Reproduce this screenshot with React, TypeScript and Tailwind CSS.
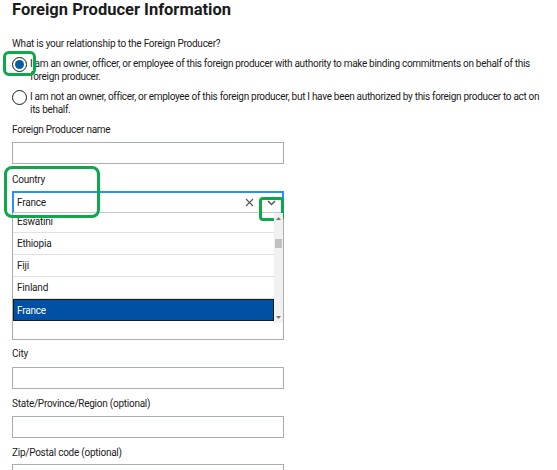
import React, { useState } from 'react';

const countries = ['Ethiopia', 'Fiji', 'Finland'];

const Radio: React.FC<{ checked: boolean }> = ({ checked }) => (
  <span className="flex h-[15px] w-[15px] shrink-0 items-center justify-center rounded-full border-[1.5px] border-[#1b1b1b] bg-white">
    {checked && <span className="h-[9px] w-[9px] rounded-full bg-[#005ea2]" />}
  </span>
);

const Field: React.FC<{ label: string; top: string; gap: string }> = ({ label, top, gap }) => (
  <div className={top}>
    <label className="block h-[14px] text-[10px] leading-[14px] tracking-[-0.25px]">{label}</label>
    <input className={`${gap} block h-[22px] w-[272px] border border-[#a9aeb1] bg-white px-1 text-[10px] outline-none`} />
  </div>
);

const App: React.FC = () => {
  const [value, setValue] = useState('France');

  return (
    <div className="h-[470px] w-[557px] overflow-hidden bg-white pl-3 font-['Roboto','Liberation_Sans',sans-serif] text-[#1b1b1b]">
      <h1 className="h-[20px] text-[16.5px] font-bold leading-[20px]">Foreign Producer Information</h1>

      <p className="mt-[17px] h-[14px] text-[10px] leading-[14px] tracking-[-0.25px]">
        What is your relationship to the Foreign Producer?
      </p>

      <div className="relative mt-[6px] flex gap-[3px]">
        <span className="absolute -left-[9px] -top-[6px] h-[25px] w-[33px] rounded-[6px] border-[3px] border-[#0ca84b]" />
        <div>
          <Radio checked />
        </div>
        <p className="pr-3 text-[10px] leading-[13px] tracking-[-0.3px]">
          I am an owner, officer, or employee of this foreign producer with authority to make binding commitments on behalf of this foreign producer.
        </p>
      </div>

      <div className="mt-[7px] flex gap-[3px]">
        <div>
          <Radio checked={false} />
        </div>
        <p className="pr-3 text-[10px] leading-[13px] tracking-[-0.3px]">
          I am not an owner, officer, or employee of this foreign producer, but I have been authorized by this foreign producer to act on its behalf.
        </p>
      </div>

      <Field label="Foreign Producer name" top="mt-[7px]" gap="mt-[5px]" />

      <div className="relative mt-[9px] w-[272px]">
        <span className="pointer-events-none absolute -left-[8px] -top-[7px] z-20 h-[52px] w-[96px] rounded-[8px] border-[3px] border-[#0ca84b]" />
        <label className="block h-[14px] text-[10px] leading-[14px] tracking-[-0.25px]">Country</label>
        <div className="mt-[4px] flex h-[22px] items-center border-x-2 border-t-2 border-b border-x-[#2491ff] border-t-[#2491ff] border-b-[#c9c9c9] bg-white">
          <input
            value={value}
            onChange={(e) => setValue(e.target.value)}
            className="h-full min-w-0 flex-1 bg-transparent px-[3px] text-[10px] tracking-[-0.2px] outline-none"
          />
          <span className="flex w-[22px] items-center justify-center">
            <svg width="9" height="9" viewBox="0 0 9 9" fill="none" stroke="#555" strokeWidth="1.1">
              <path d="M1 1l7 7M8 1L1 8" />
            </svg>
          </span>
          <span className="relative flex w-[22px] items-center justify-center">
            <span className="absolute -left-[1px] -top-[3px] h-[24px] w-[25px] rounded-[4px] border-[3px] border-[#0ca84b]" />
            <svg width="9" height="6" viewBox="0 0 9 6" fill="none" stroke="#555" strokeWidth="1.5">
              <path d="M1 1l3.5 3.5L8 1" />
            </svg>
          </span>
        </div>

        <div className="h-[127px] border-x border-b border-[#a9aeb1] bg-white">
          <div className="relative flex h-[110px] overflow-hidden">
            <ul className="flex-1 overflow-hidden text-[10px] tracking-[-0.2px]">
              <li className="-mt-[2px] flex h-[22px] items-center border-b border-[#dfe1e2] pl-[4px]">Eswatini</li>
              {countries.map((c) => (
                <li key={c} className="flex h-[22px] items-center border-b border-[#dfe1e2] pl-[4px]">
                  {c}
                </li>
              ))}
              <li className="flex h-[22px] items-center border border-[#1b1b1b] bg-[#0050a4] pl-[3px] text-white">France</li>
            </ul>
            <div className="flex w-[9px] flex-col items-center bg-[#f1f1f1]">
              <svg width="5" height="3" viewBox="0 0 5 3" className="mt-[4px]">
                <path d="M0 3L2.5 0L5 3z" fill="#777" />
              </svg>
              <span className="mt-[19px] h-[9px] w-[7px] bg-[#c1c1c1]" />
              <span className="flex-1" />
              <svg width="5" height="3" viewBox="0 0 5 3" className="mb-[4px]">
                <path d="M0 0L2.5 3L5 0z" fill="#777" />
              </svg>
            </div>
          </div>
        </div>
      </div>

      <Field label="City" top="mt-[7px]" gap="mt-[6px]" />
      <Field label="State/Province/Region (optional)" top="mt-[8px]" gap="mt-[5px]" />
      <Field label="Zip/Postal code (optional)" top="mt-[8px]" gap="mt-[4px]" />
    </div>
  );
};

export default App;
